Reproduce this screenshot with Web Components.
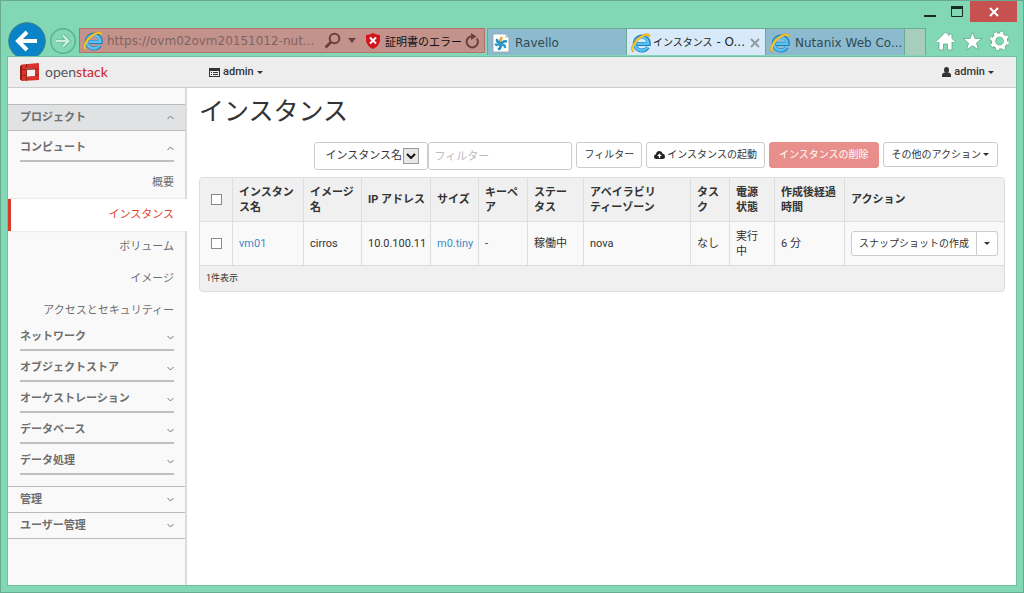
<!DOCTYPE html>
<html lang="ja">
<head>
<meta charset="utf-8">
<title>インスタンス - OpenStack Dashboard</title>
<style>
  body { margin: 0; font-family: Roboto, "Noto Sans CJK JP", sans-serif; font-size: 11px; color: #333; }
</style>
</head>
<body>
<browser-window>
  <browser-tab slot="tabs"><site-icon slot="icon"></site-icon>Ravello</browser-tab>
  <browser-tab slot="tabs" active><ie-icon slot="icon"></ie-icon><span style="font-size:10px">インスタンス</span> - O...</browser-tab>
  <browser-tab slot="tabs"><ie-icon slot="icon"></ie-icon>Nutanix Web Co...</browser-tab>
  <dashboard-page></dashboard-page>
</browser-window>

<script>
const define = (name, html) => customElements.define(name, class extends HTMLElement {
  constructor() {
    super();
    const t = document.createElement('template');
    t.innerHTML = html;
    this.attachShadow({ mode: 'open' }).append(t.content.cloneNode(true));
  }
});

define('ie-icon', `
<style>:host{display:block;width:20px;height:20px;flex:none} svg{display:block}</style>
<svg width="20" height="20" viewBox="0 0 20 20" fill="none" aria-hidden="true">
  <path d="M16.8 14.2A7 7 0 1 1 17.8 11H6" stroke="#1c7fc0" stroke-width="4"/>
  <path d="M16.4 14A6.6 6.6 0 1 1 17.2 10.8H6" stroke="#5cc1ef" stroke-width="2.6"/>
  <path d="M2.6 18.6C-1 16 3.6 8 9.4 4.2 14 1 18.6.4 18.2 4" stroke="#d99a10" stroke-width="2.2"/>
  <path d="M2.6 18.2C-.6 16 4 8.2 9.6 4.4 14 1.4 18.2.8 18 3.6" stroke="#fbd02c" stroke-width="1.4"/>
</svg>`);

define('site-icon', `
<style>:host{display:block;width:18px;height:20px;flex:none} svg{display:block}</style>
<svg width="18" height="20" viewBox="0 0 18 20" aria-hidden="true">
  <path d="M1 1h12l4 4v14H1z" fill="#fff" stroke="#8d9aa0" stroke-width=".7"/>
  <path d="M13 1v4h4z" fill="#d5dde2"/>
  <g stroke-width="2.6" stroke-linecap="round" fill="none">
    <path d="M9 9.5Q7.500 7 9.500 5" stroke="#f5a623"/>
    <path d="M10 10Q12 7.500 14 8.500" stroke="#1f8fc4"/>
    <path d="M10 11.500Q13 12 13 14" stroke="#2a9fd0"/>
    <path d="M8.500 12Q9 15 7 16" stroke="#1f8fc4"/>
    <path d="M7.500 11Q5 12.500 4 11.500" stroke="#2a9fd0"/>
    <path d="M7.500 9.500Q5 9 5 7" stroke="#1f8fc4"/>
  </g>
</svg>`);

define('browser-tab', `
<style>
  :host{display:flex;align-items:center;gap:5px;width:139px;height:27px;box-sizing:border-box;padding:1px 4px 0;background:#8cbace;border:1px solid #6aab98;border-width:1px 0 0 1px;font:12px "DejaVu Sans","Noto Sans CJK JP",sans-serif;color:#2f4a55;white-space:nowrap}
  :host([active]){background:#d8eafa;color:#222;gap:2px}
  .t{flex:1;line-height:20px}
  button{display:none;border:0;background:none;padding:0;width:12px;height:12px}
  :host([active]) button{display:block}
  svg{display:block}
</style>
<slot name="icon"></slot><span class="t"><slot></slot></span>
<button aria-label="タブを閉じる"><svg width="12" height="12" viewBox="0 0 12 12"><path d="M2 2l8 8M10 2l-8 8" stroke="#919aa3" stroke-width="2"/></svg></button>`);

define('browser-window', `
<style>
  :host{display:flex;flex-direction:column;min-height:100vh;box-sizing:border-box;border:1px solid #66ab90;background:#82d8b4;padding:0 6px 6px}
  button{border:0;background:none;padding:0;display:flex;align-items:center;justify-content:center;flex:none}
  svg{display:block}
  .title{display:flex;justify-content:flex-end;height:27px;align-items:flex-start}
  .title button{width:27px;height:21px}
  .title .close{width:47px;background:#c75050}
  .bar{display:flex;height:28px;align-items:flex-start}
  .back{width:38px;height:38px;margin:-6px 0 0 1px}
  .fwd{width:28px;height:28px;margin:-1px 2px 0 3px}
  .addr{flex:1;min-width:0;display:flex;align-items:center;height:25px;box-sizing:border-box;border:1px solid #b9706c;background:#c3928b;padding:0 4px 0 3px;font:12px "DejaVu Sans","Noto Sans CJK JP",sans-serif}
  .addr input{flex:1;min-width:0;border:0;padding:0;margin-left:4px;background:none;font:inherit;color:#7d6561}
  .addr .cert{font-size:11px;color:#111;margin:0 2px 0 5px}
  .arrow{width:22px}
  .tabs{display:flex;margin-left:2px}
  .new{width:22px;height:27px;box-sizing:border-box;background:#a7cdbd;border:1px solid #6aab98;border-bottom:0}
  .tools{display:flex;gap:6px;padding:3px 7px 0 9px}
  .page{flex:1;display:flex;flex-direction:column;position:relative;border:1px solid #6fc09f;background:#fff}
</style>
<header>
  <div class="title">
    <button aria-label="最小化"><svg width="12" height="10"><path d="M0 9h12" stroke="#1d2b26" stroke-width="2"/></svg></button>
    <button aria-label="最大化"><svg width="12" height="11"><path d="M.5 1v9.500h11V1" fill="none" stroke="#1d2b26"/><path d="M0 1.500h12" stroke="#1d2b26" stroke-width="3"/></svg></button>
    <button class="close" aria-label="閉じる"><svg width="10" height="10"><path d="M1 1l8 8M9 1L1 9" stroke="#fff" stroke-width="2"/></svg></button>
  </div>
  <div class="bar">
    <button class="back" aria-label="戻る"><svg width="38" height="38" viewBox="0 0 38 38"><circle cx="19" cy="19" r="18.300" fill="#0a84c6" stroke="#3b7f8c"/><path d="M29 19H11M19 10l-9 9 9 9" fill="none" stroke="#fff" stroke-width="4"/></svg></button>
    <button class="fwd" aria-label="進む"><svg width="28" height="28" viewBox="0 0 28 28"><circle cx="14" cy="14" r="12.300" fill="none" stroke="#5cae8e" stroke-width="1.400"/><path d="M7 14h12M14 8.500l5.500 5.500-5.500 5.500" fill="none" stroke="#60b092" stroke-width="4"/><path d="M7 14h12M14 8.500l5.500 5.500-5.500 5.500" fill="none" stroke="#c8efdf" stroke-width="2.400"/></svg></button>
    <div class="addr">
      <ie-icon></ie-icon>
      <input aria-label="アドレス" value="https://ovm02ovm20151012-nut...">
      <button aria-label="検索"><svg width="17" height="17" viewBox="0 0 17 17"><circle cx="10.500" cy="6.500" r="4.800" fill="none" stroke="#68403a" stroke-width="2"/><path d="M7 10l-5.500 5.500" stroke="#68403a" stroke-width="2.800"/></svg></button>
      <button class="arrow" aria-label="履歴"><svg width="8" height="5"><path d="M0 0h8L4 5z" fill="#68403a"/></svg></button>
      <svg style="margin-left:3px" width="14" height="16" viewBox="0 0 14 16"><path d="M7 0Q10 2 14 2V8Q13 13 7 16 1 13 0 8V2Q4 2 7 0z" fill="#d4141c"/><path d="M4 4.500l6 6M10 4.500l-6 6" stroke="#fff" stroke-width="2"/></svg>
      <span class="cert">証明書のエラー</span>
      <button aria-label="更新"><svg width="16" height="16" viewBox="0 0 16 16"><path d="M12.800 5.500A5.600 5.600 0 1 1 8 3.200" fill="none" stroke="#68403a" stroke-width="2"/><path d="M7 0l5.500 3.500L7 7z" fill="#68403a"/></svg></button>
    </div>
    <div class="tabs"><slot name="tabs"></slot><button class="new" aria-label="新しいタブ"></button></div>
    <div class="tools">
      <button aria-label="ホーム"><svg width="21" height="20" viewBox="0 0 21 20"><path d="M10.500 1L1 10.500l1.500 1.500 1.500-1V19h4.500v-6h4v6H17v-8l1.500 1 1.500-1.500-3-3V3h-3v1.500z" fill="#fff" stroke="#5aa98b" stroke-width=".8"/></svg></button>
      <button aria-label="お気に入り"><svg width="21" height="20" viewBox="0 0 21 20"><path d="M10.500 1l2.500 6.500h7l-5.500 4.500 2 7-6-4.200-6 4.200 2-7L1 7.500h7z" fill="#fff" stroke="#5aa98b" stroke-width=".8"/></svg></button>
      <button aria-label="ツール"><svg width="21" height="20" viewBox="-10.500 -10 21 20"><circle r="8" fill="none" stroke="#5aa98b" stroke-width="4" stroke-dasharray="3.900 2.383"/><circle r="6.200" fill="none" stroke="#5aa98b" stroke-width="5"/><circle r="8" fill="none" stroke="#fff" stroke-width="3" stroke-dasharray="3 3.283" stroke-dashoffset="-.45"/><circle r="6" fill="none" stroke="#fff" stroke-width="3.400"/></svg></button>
    </div>
  </div>
</header>
<main class="page"><slot></slot></main>`);

define('top-bar', `
<style>
  :host{display:flex;align-items:center;height:30px;background:#ededed;border-bottom:1px solid #ccc;padding:0 22px 0 12px}
  a{text-decoration:none;color:inherit}
  .logo{display:flex;align-items:center;gap:4px;width:189px;font:14px Lato,sans-serif;color:#54565b}
  .logo b{font-weight:400;color:#d0222a}
  .logo span{line-height:20px}
  button{display:flex;align-items:center;gap:3px;border:0;background:none;padding:0;font:500 11px/16px Roboto,sans-serif;color:#333}
  i{border:3px solid transparent;border-top-color:#333;border-bottom:0}
  .user{margin-left:auto}
</style>
<a class="logo" href="#" aria-label="openstack"><svg width="21" height="20" viewBox="0 0 21 20"><path d="M2 2.500L19 1v17L2 19z" fill="#d9342b"/><path d="M2 2.500L0 4v13.500L2 19z" fill="#8f1f1a"/><path d="M6 6.500l9-.5v8l-9 .5z" fill="#f4f0f0"/><path d="M2 7.500h4M15 7h4M2 13.500h4M15 13h4M6.500 2v4M6.500 14.500V19" stroke="#9c221c"/><path d="M6 6.500l9-.5v1.500l-8 .5v6l-1 .5z" fill="#a32822"/></svg><span>open<b>stack</b></span></a>
<button><svg width="11" height="9" viewBox="0 0 11 9"><path d="M0 0h11v9H0z" fill="#333"/><path d="M1 3h9v5H1z" fill="#eee"/><path d="M2 4.500h1M4 4.500h5M2 6.500h1M4 6.500h5" stroke="#333"/></svg>admin<i></i></button>
<button class="user"><svg width="9" height="10" viewBox="0 0 9 10"><ellipse cx="4.500" cy="3" rx="2.500" ry="3" fill="#333"/><path d="M0 10V8Q0 6 3 5.500h3Q9 6 9 8v2z" fill="#333"/></svg>admin<i></i></button>`);

const up = '<svg width="7" height="5" viewBox="0 0 7 5"><path d="M.5 4l3-3 3 3" fill="none" stroke="#777"/></svg>';
const down = '<svg width="7" height="5" viewBox="0 0 7 5"><path d="M.5 1l3 3 3-3" fill="none" stroke="#777"/></svg>';
const service = name => `<button class="service">${name}${down}</button>`;

define('side-nav', `
<style>
  :host{display:block;width:179px;flex:none;box-sizing:border-box;background:#f9f9f9;border-right:2px solid #dcdcdc;padding-top:16px;color:#6e6e6e}
  button{display:flex;justify-content:space-between;align-items:center;box-sizing:border-box;border:0;background:none;font:bold 11px/16px Roboto,"Noto Sans CJK JP",sans-serif;color:#6e6e6e;text-align:left}
  .panel{width:100%;height:26px;padding:0 11px 0 12px;border-top:1px solid #bbb}
  .panel.open{background:#e1e2e4}
  .group{border-top:1px solid #bbb;padding-bottom:11px}
  .service{height:24px;margin:7px 11px 0 12px;padding:0 0 2px;width:154px;border-bottom:2px solid #bfbfbf}
  ul{list-style:none;margin:5px 0 0;padding:0}
  ul + .service{margin-top:0}
  li a{display:block;line-height:32px;text-align:right;padding-right:11px;color:#6e6e6e;text-decoration:none}
  li a.on{background:#fff;color:#e0432f;border-left:3px solid #d93b2b;margin-right:-2px;padding-right:13px;box-shadow:0 0 2px #ccc;clip-path:inset(-2px 0)}
  .last{height:27px;border-bottom:1px solid #bbb}
</style>
<nav>
  <button class="panel open">プロジェクト${up}</button>
  <div class="group">
    <button class="service">コンピュート${up}</button>
    <ul>
      <li><a href="#">概要</a></li>
      <li><a href="#" class="on">インスタンス</a></li>
      <li><a href="#">ボリューム</a></li>
      <li><a href="#">イメージ</a></li>
      <li><a href="#">アクセスとセキュリティー</a></li>
    </ul>
    ${['ネットワーク', 'オブジェクトストア', 'オーケストレーション', 'データベース', 'データ処理'].map(service).join('')}
  </div>
  <button class="panel">管理${down}</button>
  <button class="panel last">ユーザー管理${down}</button>
</nav>`);

define('action-bar', `
<style>
  :host{display:flex;justify-content:flex-end;align-items:flex-start;gap:4px;padding-right:7px}
  .search{display:flex}
  .pick{position:relative}
  select,input,button{box-sizing:border-box;border:1px solid #ccc;border-radius:3px;background:#fff;font:11px/16px Roboto,"Noto Sans CJK JP",sans-serif;color:#333;margin:0}
  select{appearance:none;width:114px;height:28px;padding:0 0 0 10px}
  .pick span{position:absolute;right:9px;top:6px;width:14px;height:14px;border:1px solid #999;background:#e8e8e8;display:flex;align-items:center;justify-content:center;pointer-events:none}
  input{width:144px;height:28px;padding:0 5px}
  input::placeholder{color:#bbb}
  button{height:26px;padding:0 7px;font-size:10px;display:flex;align-items:center;gap:2px;white-space:nowrap}
  .danger{background:#e88f8b;border-color:#e88f8b;color:#fff;padding:0 9px}
  .more{height:25px;padding:0 8px}
  i{border:3px solid transparent;border-top-color:#333;border-bottom:0}
</style>
<div class="search">
  <div class="pick"><select aria-label="フィルター項目"><option>インスタンス名</option></select><span><svg width="10" height="6"><path d="M1 1l4 4 4-4" fill="none" stroke="#111" stroke-width="2"/></svg></span></div>
  <input aria-label="フィルター" placeholder="フィルター">
</div>
<button>フィルター</button>
<button><svg width="11" height="8" viewBox="0 0 11 8"><path d="M2.500 8Q0 8 0 5.500 0 3.500 2 3.200 2.500 0 5.500 0 8 0 8.500 2.500 11 3 11 5.500 11 8 8.500 8z" fill="#222"/><path d="M5.500 2.500L8 5H6.200v2H4.800V5H3z" fill="#fff"/></svg>インスタンスの起動</button>
<button class="danger">インスタンスの削除</button>
<button class="more">その他のアクション<i></i></button>`);

define('instance-table', `
<style>
  :host{display:block;border:1px solid #ddd;border-radius:4px;overflow:hidden;background:#f0f0f0}
  table{width:100%;table-layout:fixed;border-collapse:separate;border-spacing:0;font-size:11px;line-height:15px}
  th,td{height:43px;box-sizing:content-box;padding:0 0 0 6px;text-align:left;vertical-align:middle;border-left:1px solid #ddd}
  th:first-child,td:first-child{border-left:0}
  th{background:#f0f0f0;color:#333;border-bottom:1px solid #ddd}
  tbody td{background:#f9f9f9;border-bottom:1px solid #ddd}
  tfoot td{height:25px;font-size:9px}
  th.c,td.c{text-align:center;padding:0}
  input{appearance:none;display:block;margin:0 auto;width:11px;height:11px;border:1px solid #8a8a8a;background:#fff;box-sizing:border-box}
  a{color:#428bca;text-decoration:none}
  .n{white-space:nowrap}
  .split{display:flex}
  button{box-sizing:border-box;height:25px;border:1px solid #ccc;background:#fff;font:10px/16px Roboto,"Noto Sans CJK JP",sans-serif;color:#333;padding:0 7px;white-space:nowrap;border-radius:3px 0 0 3px}
  button + button{border-left:0;border-radius:0 3px 3px 0}
  i{display:block;border:3px solid transparent;border-top-color:#333;border-bottom:0}
</style>
<table>
  <colgroup><col style="width:32px"><col style="width:71px"><col style="width:58px"><col style="width:69px"><col style="width:48px"><col style="width:49px"><col style="width:56px"><col><col style="width:39px"><col style="width:45px"><col style="width:70px"><col style="width:160px"></colgroup>
  <thead><tr>
    <th class="c"><input type="checkbox" aria-label="すべて選択"></th>
    <th>インスタン<br>ス名</th><th>イメージ<br>名</th><th class="n">IP アドレス</th><th>サイズ</th><th>キーペ<br>ア</th><th>ステー<br>タス</th><th>アベイラビリ<br>ティーゾーン</th><th>タス<br>ク</th><th>電源<br>状態</th><th>作成後経過<br>時間</th><th>アクション</th>
  </tr></thead>
  <tbody><tr>
    <td class="c"><input type="checkbox" aria-label="vm01 を選択"></td>
    <td><a href="#">vm01</a></td><td>cirros</td><td>10.0.100.11</td><td class="n"><a href="#">m0.tiny</a></td><td>-</td><td>稼働中</td><td>nova</td><td>なし</td><td>実行<br>中</td><td>6 分</td>
    <td><div class="split"><button>スナップショットの作成</button><button aria-label="その他"><i></i></button></div></td>
  </tr></tbody>
  <tfoot><tr><td colspan="12">1件表示</td></tr></tfoot>
</table>`);

define('dashboard-page', `
<style>
  :host{flex:1;display:flex;flex-direction:column}
  .body{flex:1;display:flex}
  .main{flex:1;min-width:0;padding:0 11px 0 12px}
  h1{margin:6px 0 12px;font:25px/36px Roboto,"Noto Sans CJK JP",sans-serif;color:#333}
  instance-table{margin-top:7px}
</style>
<top-bar></top-bar>
<div class="body">
  <side-nav></side-nav>
  <section class="main">
    <h1>インスタンス</h1>
    <action-bar></action-bar>
    <instance-table></instance-table>
  </section>
</div>`);
</script>
</body>
</html>
